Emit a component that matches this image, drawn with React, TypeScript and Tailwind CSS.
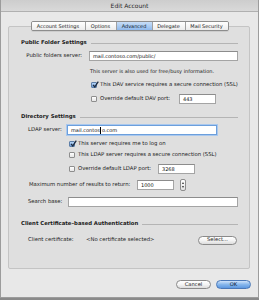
import React from 'react'

function Heading({ title }: { title: string }) {
  return (
    <div className="flex h-[8px] items-center pl-[12px] pr-[11px]">
      <span className="whitespace-nowrap font-bold text-[#1a1a1a]">{title}</span>
      <div className="ml-[4px] h-px flex-1 bg-[#b4b4b4]" />
    </div>
  )
}

function Field({ w, value }: { w: string; value?: string }) {
  return (
    <div
      className={`flex h-[10px] items-center border border-[#a4a4a4] border-t-[#8c8c8c] bg-white pl-[3px] text-[5px] text-[#111] ${w}`}
    >
      {value}
    </div>
  )
}

function Check({ on }: { on?: boolean }) {
  return (
    <div
      className={`relative flex h-[6px] w-[6px] shrink-0 items-center justify-center rounded-[1px] border ${
        on ? 'border-[#5d7fa9] bg-gradient-to-b from-[#b9d6f6] to-[#6d9fdb]' : 'border-[#8e8e8e] bg-gradient-to-b from-white to-[#e6e6e6]'
      }`}
    >
      {on && (
        <svg viewBox="0 0 10 10" className="absolute -top-[2px] left-0 h-[7px] w-[7px]">
          <path d="M1.5 5.5 L4 8.5 L9 1" fill="none" stroke="#1d2b3f" strokeWidth="1.8" />
        </svg>
      )}
    </div>
  )
}

function Pill({ label, w, blue }: { label: string; w: string; blue?: boolean }) {
  return (
    <div
      className={`flex h-[9px] items-center justify-center rounded-full border text-[5.2px] ${w} ${
        blue
          ? 'border-[#4a78b8] bg-gradient-to-b from-[#cfe3fa] via-[#86b6ec] to-[#5d98e0] text-[#0e1c33]'
          : 'border-[#8a8a8a] bg-gradient-to-b from-white via-[#f4f4f4] to-[#dcdcdc] text-[#1a1a1a]'
      }`}
    >
      {label}
    </div>
  )
}

const tabs = ['Account Settings', 'Options', 'Advanced', 'Delegate', 'Mail Security']
const tabW = ['w-[53px]', 'w-[31px]', 'w-[36px]', 'w-[33px]', 'w-[43px]']

export default function App() {
  return (
    <div className="h-[300px] w-[259px] overflow-hidden bg-[#8a8a8a] font-['DejaVu_Sans',Verdana,sans-serif] text-[5.3px] leading-none text-[#1a1a1a]">
      <div className="flex h-[298px] flex-col border-x border-b border-[#9c9c9c] bg-[#e8e8e8]">
        {/* title bar */}
        <div className="flex h-[12px] items-center justify-center border-b border-[#b0b0b0] bg-gradient-to-b from-[#cdcdcd] to-[#d9d9d9] text-[6px] text-[#2a2a2a]">
          Edit Account
        </div>

        {/* tabs */}
        <div className="relative z-10 -mb-[5px] mt-[9px] flex justify-center">
          <div className="flex h-[10px] overflow-hidden rounded-[2px] border border-[#8d8d8d] shadow-[0_1px_0_rgba(0,0,0,0.08)]">
            {tabs.map((t, i) => (
              <div
                key={t}
                className={`flex items-center justify-center whitespace-nowrap text-[5px] ${tabW[i]} ${i > 0 ? 'border-l border-[#a0a0a0]' : ''} ${
                  t === 'Advanced'
                    ? 'bg-gradient-to-b from-[#c8def7] to-[#8fb9ec] text-[#0d1a2e]'
                    : 'bg-gradient-to-b from-white to-[#ececec]'
                }`}
              >
                {t}
              </div>
            ))}
          </div>
        </div>

        {/* panel */}
        <div className="ml-[7px] mr-[8px] flex h-[243px] flex-col whitespace-nowrap rounded-[2px] border border-[#c4c4c4] bg-[#dfdfdf]">
          <div className="mt-[12px]">
            <Heading title="Public Folder Settings" />
          </div>

          <div className="mt-[4px] flex items-center">
            <span className="w-[73px] text-right">Public folders server:</span>
            <div className="ml-[7px]">
              <Field w="w-[149px]" value="mail.contoso.com/public/" />
            </div>
          </div>

          <div className="mt-[6px] flex h-[8px] items-center pl-[81px] text-[5px]">
            This server is also used for free/busy information.
          </div>

          <div className="mt-[6px] flex h-[8px] items-center gap-[3px] pl-[82px]">
            <Check on />
            <span>This DAV service requires a secure connection (SSL)</span>
          </div>

          <div className="mt-[5px] flex items-center pl-[82px]">
            <Check />
            <span className="ml-[3px] w-[79px]">Override default DAV port:</span>
            <Field w="w-[37px]" value="443" />
          </div>

          <div className="mt-[9px]">
            <Heading title="Directory Settings" />
          </div>

          <div className="mt-[4px] flex items-center pl-[19px]">
            <span className="w-[39px]">LDAP server:</span>
            <div className="flex h-[10px] w-[150px] items-center border border-[#6c9fdc] bg-white pl-[3px] text-[5px] text-[#111] shadow-[0_0_0_1px_#a9c8ee]">
              mail.contos
              <span className="mx-[0.5px] h-[7px] w-px bg-black" />
              o.com
            </div>
          </div>

          <div className="mt-[5px] flex h-[8px] items-center gap-[3px] pl-[60px]">
            <Check on />
            <span>This server requires me to log on</span>
          </div>

          <div className="mt-[3px] flex h-[8px] items-center gap-[3px] pl-[60px]">
            <Check />
            <span>This LDAP server requires a secure connection (SSL)</span>
          </div>

          <div className="mt-[5px] flex items-center pl-[60px]">
            <Check />
            <span className="ml-[3px] w-[80px]">Override default LDAP port:</span>
            <Field w="w-[37px]" value="3268" />
          </div>

          <div className="mt-[5px] flex h-[12px] items-center pl-[20px]">
            <span className="w-[108px]">Maximum number of results to return:</span>
            <Field w="w-[37px]" value="1000" />
            <div className="ml-[6px] flex h-[12px] w-[6px] flex-col items-center justify-between rounded-[2px] border border-[#8d8d8d] bg-gradient-to-b from-white to-[#e2e2e2] py-[2px]">
              <span className="h-0 w-0 border-x-[1.5px] border-b-[2px] border-x-transparent border-b-[#333]" />
              <span className="h-0 w-0 border-x-[1.5px] border-t-[2px] border-x-transparent border-t-[#333]" />
            </div>
          </div>

          <div className="mt-[6px] flex items-center pl-[19px]">
            <span className="w-[40px]">Search base:</span>
            <Field w="w-[170px]" />
          </div>

          <div className="mt-[13px]">
            <Heading title="Client Certificate–based Authentication" />
          </div>

          <div className="mt-[7px] flex h-[10px] items-center pl-[19px]">
            <span className="w-[58px]">Client certificate:</span>
            <span className="w-[112px]">&lt;No certificate selected&gt;</span>
            <Pill label="Select..." w="w-[39px]" />
          </div>
        </div>

        {/* buttons */}
        <div className="mt-[11px] flex justify-end gap-[5px] pr-[7px]">
          <Pill label="Cancel" w="w-[35px]" />
          <Pill label="OK" w="w-[35px]" blue />
        </div>
      </div>
    </div>
  )
}
